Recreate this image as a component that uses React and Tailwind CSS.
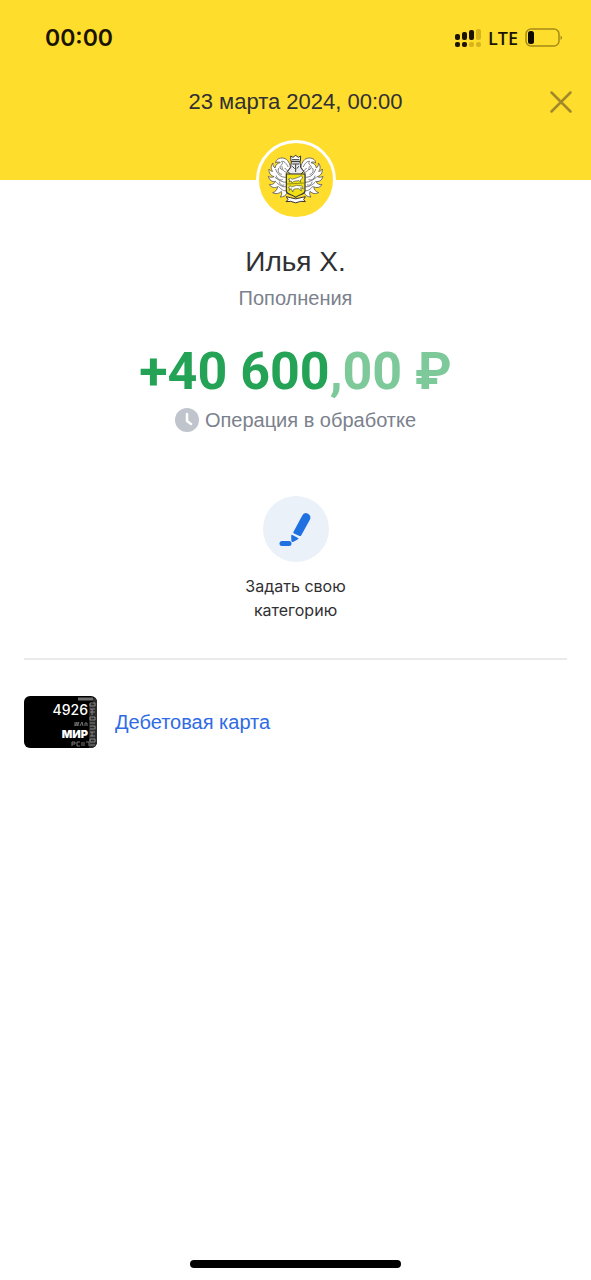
function StatusBar() {
  return (
    <div className="flex items-center justify-between pt-5 pl-[45px] pr-7 h-14 text-[#1a1400] font-['Inter',sans-serif]">
      <span className="text-[23px] leading-9 font-semibold">00:00</span>
      <div className="flex items-center gap-[7px]">
        <svg className="w-[26px] h-[18px]" viewBox="0 0 26 18" aria-hidden="true">
          <g fill="#1a1400">
            <rect x="0" y="5" width="5" height="6" rx="2" />
            <rect x="7" y="3" width="5" height="8" rx="2" />
            <rect x="14" y="1" width="5" height="10" rx="2" />
            <rect x="0" y="13" width="5" height="5" rx="2" />
            <rect x="7" y="13" width="5" height="5" rx="2" />
          </g>
          <g fill="#d8b41c">
            <rect x="21" y="0" width="5" height="11" rx="2" />
            <rect x="14" y="13" width="5" height="5" rx="2" />
            <rect x="21" y="13" width="5" height="5" rx="2" />
          </g>
        </svg>
        <span className="text-[18px] leading-6 font-semibold font-['Open_Sans',sans-serif]">LTE</span>
        <svg className="w-[38px] h-[20px]" viewBox="0 0 38 20" aria-hidden="true">
          <rect x="1" y="1" width="33" height="17" rx="5" fill="none" stroke="#a58b17" strokeWidth="1.5" />
          <rect x="3" y="3" width="6" height="13" rx="2.5" fill="#0d0a00" />
          <path d="M35.5 7.5c2 .8 2 3.700 0 4.500z" fill="#a58b17" />
        </svg>
      </div>
    </div>
  );
}

// One side of the mantling around the shield, mirrored for the other side
function Leaves() {
  return (
    <g strokeLinejoin="round" strokeLinecap="round">
      <path
        d="M73 50C70 36 63 24 48 24C36 24 29 31 29 39C34 35 39 35 43 38C34 39 28 45 27 54C22 50 20 45 21 39C14 47 14 57 20 64C15 64 11 61 9 57C8 69 14 77 24 80C18 83 12 82 7 79C10 91 19 97 29 94C25 101 18 105 10 104C16 113 27 115 35 110C34 119 28 126 20 128C29 133 39 131 46 124C48 130 47 136 43 141C53 141 60 136 63 129L61 72Z"
        fill="#fff"
        stroke="#55555c"
        strokeWidth="2.500"
      />
      <path
        d="M66 50C60 38 54 33 47 34C51 38 50 43 44 47C40 51 42 57 48 59M62 67C52 65 49 58 48 50M59 82C43 82 34 72 29 58M59 97C48 97 36 89 27 82M60 110C52 112 43 108 32 98M60 122C53 124 47 119 38 110M38 55C34 63 38 72 46 73M31 78C34 88 42 92 49 89M40 96C42 104 47 108 54 105M57 55C60 60 64 62 68 62"
        fill="none"
        stroke="#65656c"
        strokeWidth="2.500"
      />
    </g>
  );
}

function Emblem() {
  return (
    <svg className="w-15 h-15" viewBox="0 0 180 180" aria-hidden="true">
      <Leaves />
      <g transform="translate(178 0) scale(-1 1)">
        <Leaves />
      </g>
      <path d="M75 34L74 18L81 22L89 16L97 22L104 18L103 34Z" fill="#fff" stroke="#333338" strokeWidth="3" />
      <path d="M78 29H100" stroke="#333338" strokeWidth="3" />
      <path d="M76 35H102L104 53L113 64L104 73H74L65 64L74 53Z" fill="#ececee" stroke="#333338" strokeWidth="3" />
      <path d="M79 42H99M89 43V66M79 49L86 56M99 49L92 56" fill="none" stroke="#333338" strokeWidth="3" />
      <path d="M61 72H117V123C117 134 102 131 89 142C76 131 61 134 61 123Z" fill="#efe116" stroke="#333338" strokeWidth="3.500" />
      <path d="M62 102L116 99" stroke="#6b6720" strokeWidth="2" />
      <path d="M67 88L74 84L78 88L97 82L106 77L110 84L103 90L104 97L99 92L83 94L78 99L76 93L69 96L72 90Z" fill="#fff" stroke="#55553c" strokeWidth="2" />
      <path d="M67 114L72 107L77 111L91 106L108 108L112 116L104 113L106 123L98 116L84 117L80 126L76 116L69 122L72 115Z" fill="#fff" stroke="#55553c" strokeWidth="2" />
      <path d="M61 140L73 143Q89 150 105 143L118 140L113 149L118 155L104 154Q89 163 74 154L60 155L66 149Z" fill="#fff" stroke="#333338" strokeWidth="3" />
    </svg>
  );
}

function CardThumb() {
  return (
    <div className="relative w-[73px] h-[52px] shrink-0 rounded-md bg-black overflow-hidden text-white font-['Inter',sans-serif] text-right">
      <svg className="absolute inset-0 w-full h-full" viewBox="0 0 73 52" aria-hidden="true">
        <path d="M54 3H69" stroke="#6f6f6f" strokeWidth="3" />
        <path d="M69 2H73V52H65V8H69Z" fill="#2b2b2b" />
        <path
          d="M66 7h5v3h-5zM66 13h5M66 16h5M68 13v6M66 21h5v3h-5zM66 27h5M66 30h5v3h-5M66 36h5M68 36v4M66 40h5M66 43h5v3h-5zM66 49h5"
          fill="none"
          stroke="#858585"
          strokeWidth="1"
        />
        <path d="M51 30l2-4M53 30l2-4M50 27h5M50 29h5M56 30l2-4l1 4M61 30v-3h2v3M48 50v-4h3v2h-3M53 50v-4h3M53 50h3M58 46v4M60 46v4M62 46h3v4" fill="none" stroke="#777" strokeWidth="1" />
      </svg>
      <div className="relative pr-[9px] pt-1">
        <p className="text-sm leading-5 font-medium">4926</p>
        <p className="mt-1 text-[11px] leading-5 font-black">МИР</p>
      </div>
    </div>
  );
}

export default function App() {
  return (
    <div className="min-h-screen flex flex-col bg-white text-[#303033] font-['Liberation_Sans',Arial,sans-serif]">
      <header className="h-[180px] bg-[#ffdd2d]">
        <StatusBar />
        <div className="grid grid-cols-[48px_1fr_48px] items-center pt-6 px-[11px]">
          <h1 className="col-start-2 text-center text-[22px] leading-[44px]">23 марта 2024, 00:00</h1>
          <button type="button" aria-label="Закрыть" className="justify-self-end p-2 text-[#a1892a]">
            <svg className="w-[22px] h-[22px]" viewBox="0 0 22 22" fill="none" stroke="currentColor" strokeWidth="2.5" strokeLinecap="round">
              <path d="M1.500 1.500L20.500 20.500M20.500 1.500L1.500 20.500" />
            </svg>
          </button>
        </div>
      </header>

      <main className="grow flex flex-col items-center px-6">
        <div className="-mt-10 w-20 h-20 rounded-full border-3 border-white bg-[#ffdd2d] flex items-center justify-center">
          <Emblem />
        </div>

        <h2 className="mt-6 text-[28px] leading-9">Илья Х.</h2>
        <p className="mt-1 text-[20px] leading-7 text-[#7b818c]">Пополнения</p>

        <p className="mt-7 text-[52px] leading-[64px] font-bold text-[#24a256] font-['Roboto',sans-serif]">
          +40 600<span className="text-[#7dc99a]">,00 ₽</span>
        </p>
        <div className="mt-0.5 flex items-center gap-1.5 text-[20px] leading-7 text-[#7b818c]">
          <svg className="w-6 h-6" viewBox="0 0 24 24" aria-hidden="true">
            <circle cx="12" cy="12" r="12" fill="#c0c4cd" />
            <path d="M12 6V13L16 16" fill="none" stroke="#fff" strokeWidth="2.500" strokeLinecap="round" strokeLinejoin="round" />
          </svg>
          <span>Операция в обработке</span>
        </div>

        <button type="button" className="mt-[62px] flex flex-col items-center">
          <span className="w-[66px] h-[66px] rounded-full bg-[#ebf1f9] flex items-center justify-center">
            <svg className="w-[66px] h-[66px]" viewBox="0 0 66 66" fill="#1f70e0" aria-hidden="true">
              <path d="M30.400 36L39 20Q41 15.800 45 17.700Q48.800 20 46.700 24L38.300 39.200Q37.400 40.600 36 39.800L31 37.400Q29.800 37 30.400 36Z" />
              <path d="M29.500 39L35 42Q36 42.600 35 43.200L30.500 45.700Q28.300 46.700 28.300 44.200L28.200 39.700Q28.300 38.500 29.500 39Z" />
              <rect x="16.500" y="45" width="12" height="5" rx="2.500" />
            </svg>
          </span>
          <span className="mt-3 w-32 text-[16px] leading-6 font-['Inter',sans-serif]">Задать свою категорию</span>
        </button>

        <section className="mt-9 w-full border-t-2 border-[#e9eaec] pt-9">
          <a href="#card" className="flex items-center gap-[18px] text-[20px] leading-7 text-[#2f6be4]">
            <CardThumb />
            Дебетовая карта
          </a>
        </section>
      </main>

      <div className="mb-3 mx-auto w-[211px] h-2 rounded-full bg-black" />
    </div>
  );
}
